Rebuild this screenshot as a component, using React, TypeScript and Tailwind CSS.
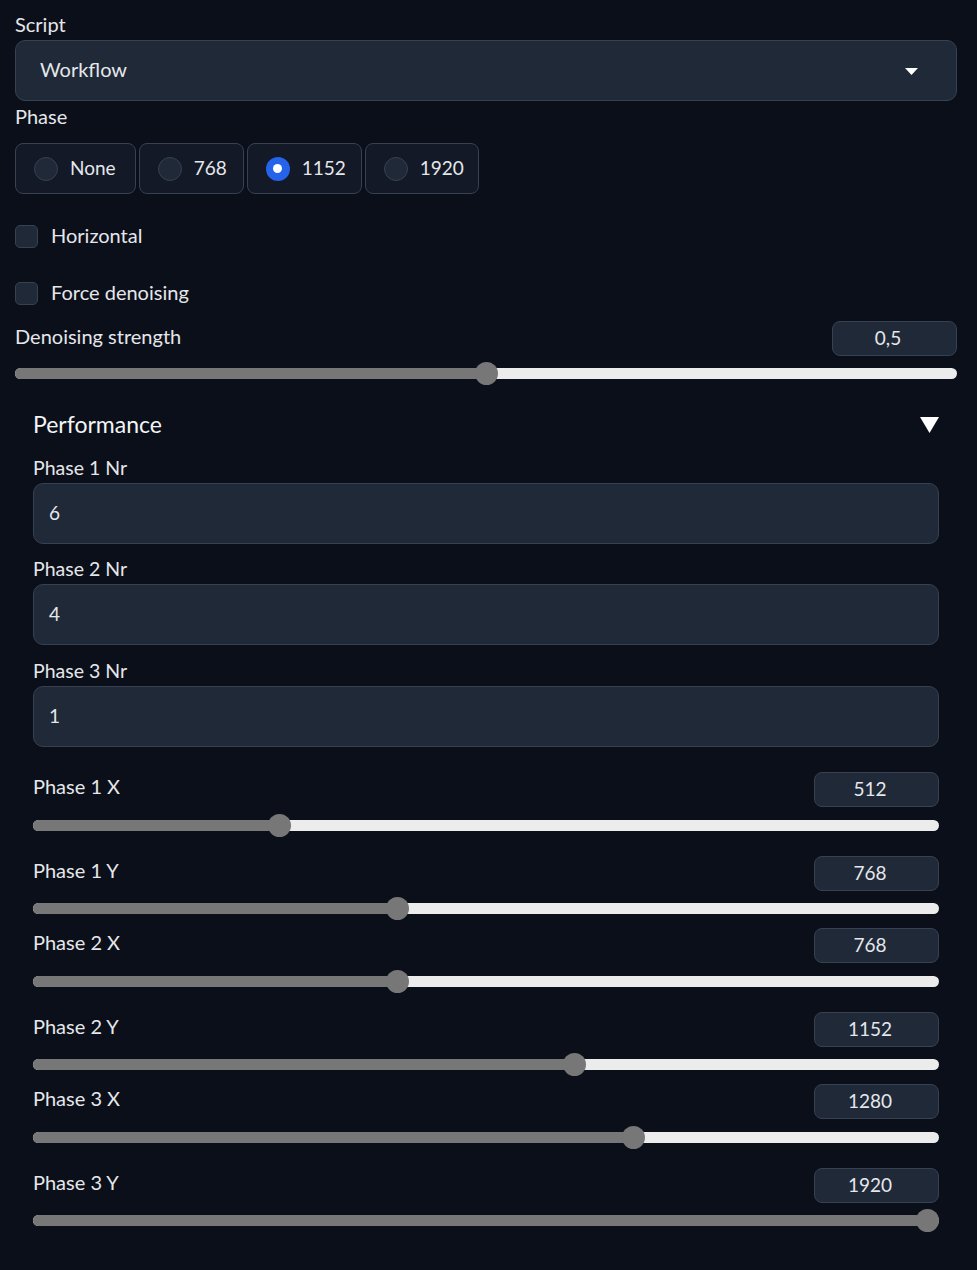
const FONT = "font-['Lato','Noto_Sans',sans-serif]"

function NumberBox({ value }: { value: string }) {
  return (
    <div className="flex h-[35px] w-[125px] items-center justify-center rounded-[8px] border border-[#374151] bg-[#1f2937] pr-[13px] text-[19px] text-[#e5e7eb]">
      {value}
    </div>
  )
}

function Slider({ frac, className = "" }: { frac: number; className?: string }) {
  return (
    <div className={`relative h-[24px] ${className}`}>
      <div className="absolute left-0 right-0 top-[6px] h-[11px] rounded-full bg-[#ececec]" />
      <div
        className="absolute left-0 top-[6px] h-[11px] rounded-full bg-[#777777]"
        style={{ width: `calc(${frac} * (100% - 23px) + 11.5px)` }}
      />
      <div
        className="absolute top-0 h-[23px] w-[23px] rounded-full bg-[#777777]"
        style={{ left: `calc(${frac} * (100% - 23px))` }}
      />
    </div>
  )
}

function SliderField({ label, value, frac, top, gap }: { label: string; value: string; frac: number; top: string; gap: string }) {
  return (
    <div className={top}>
      <div className="flex items-center justify-between">
        <span className="-mt-[7px] text-[20px] text-[#e5e7eb]">{label}</span>
        <NumberBox value={value} />
      </div>
      <Slider frac={frac} className={gap} />
    </div>
  )
}

function TextField({ label, value, top }: { label: string; value: string; top: string }) {
  return (
    <div className={top}>
      <div className="h-[24px] leading-[22px] text-[19.5px] text-[#e5e7eb]">{label}</div>
      <div className="mt-[2px] flex h-[61px] items-center rounded-[10px] border border-[#374151] bg-[#1f2937] px-[15px] text-[19px] text-[#e5e7eb]">
        {value}
      </div>
    </div>
  )
}

function Radio({ label, checked, pr }: { label: string; checked?: boolean; pr: string }) {
  return (
    <div className={`flex h-[51px] items-center gap-[12px] rounded-[8px] border border-[#374151] bg-[#131926] pl-[18px] ${pr}`}>
      {checked ? (
        <span className="flex h-[24px] w-[24px] items-center justify-center rounded-full bg-[#2563eb]">
          <span className="h-[9px] w-[9px] rounded-full bg-white" />
        </span>
      ) : (
        <span className="h-[24px] w-[24px] rounded-full border border-[#374151] bg-[#1f2937]" />
      )}
      <span className="text-[19px] text-[#e5e7eb]">{label}</span>
    </div>
  )
}

function Checkbox({ label, top }: { label: string; top: string }) {
  return (
    <div className={`flex h-[23px] items-center gap-[13px] ${top}`}>
      <span className="h-[23px] w-[23px] rounded-[5px] border border-[#374151] bg-[#1f2937]" />
      <span className="-mt-[3px] text-[20px] text-[#e5e7eb]">{label}</span>
    </div>
  )
}

export default function App() {
  return (
    <div className={`min-h-[1270px] w-[977px] bg-[#0b0f19] px-[15px] pt-[13px] pb-[20px] ${FONT}`}>
      <div className="pr-[5px]">
        <div className="h-[24px] leading-[22px] text-[20px] text-[#e5e7eb]">Script</div>
        <div className="mt-[3px] flex h-[61px] items-center justify-between rounded-[10px] border border-[#374151] bg-[#1f2937] pl-[24px] pr-[38px] text-[20px] text-[#e5e7eb]">
          <span className="-mt-[3px]">Workflow</span>
          <svg width="13" height="7" viewBox="0 0 13 7" className="mt-[2px]">
            <path d="M0 0 L13 0 L6.5 7 Z" fill="#ffffff" />
          </svg>
        </div>
        <div className="mt-[4px] h-[24px] leading-[22px] text-[20px] text-[#e5e7eb]">Phase</div>
        <div className="mt-[14px] flex gap-[3px]">
          <Radio label="None" pr="pr-[19px]" />
          <Radio label="768" pr="pr-[16px]" />
          <Radio label="1152" pr="pr-[15px]" checked />
          <Radio label="1920" pr="pr-[14px]" />
        </div>
        <Checkbox label="Horizontal" top="mt-[31px]" />
        <Checkbox label="Force denoising" top="mt-[34px]" />
        <div className="mt-[16px] flex items-center justify-between">
          <span className="-mt-[6px] text-[20px] text-[#e5e7eb]">Denoising strength</span>
          <NumberBox value="0,5" />
        </div>
        <Slider frac={0.5} className="mt-[6px]" />

        <div className="px-[18px]">
          <div className="mt-[24px] flex h-[30px] items-center justify-between">
            <span className="-mt-[2px] text-[23px] text-[#f3f4f6]">Performance</span>
            <svg width="19" height="16" viewBox="0 0 19 16">
              <path d="M0 0 L19 0 L9.5 16 Z" fill="#ffffff" />
            </svg>
          </div>
          <TextField label="Phase 1 Nr" value="6" top="mt-[17px]" />
          <TextField label="Phase 2 Nr" value="4" top="mt-[14px]" />
          <TextField label="Phase 3 Nr" value="1" top="mt-[15px]" />
          <SliderField label="Phase 1 X" value="512" frac={512 / 1920} top="mt-[25px]" gap="mt-[7px]" />
          <SliderField label="Phase 1 Y" value="768" frac={768 / 1920} top="mt-[18px]" gap="mt-[6px]" />
          <SliderField label="Phase 2 X" value="768" frac={768 / 1920} top="mt-[7px]" gap="mt-[7px]" />
          <SliderField label="Phase 2 Y" value="1152" frac={1152 / 1920} top="mt-[18px]" gap="mt-[6px]" />
          <SliderField label="Phase 3 X" value="1280" frac={1280 / 1920} top="mt-[7px]" gap="mt-[7px]" />
          <SliderField label="Phase 3 Y" value="1920" frac={1} top="mt-[18px]" gap="mt-[6px]" />
        </div>
      </div>
    </div>
  )
}
